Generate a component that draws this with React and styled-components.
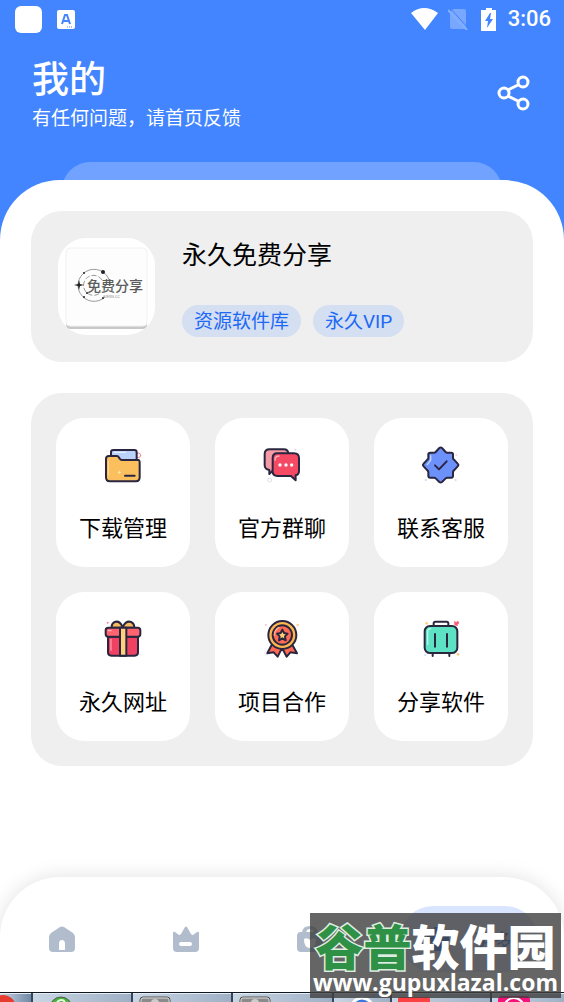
import React from "react";
import styled, { createGlobalStyle } from "styled-components";

const colors = {
    primary: "#4285ff",
    primarySoft: "#71a2ff",
    card: "#efefef",
    tag: "#d5dff2",
    tagText: "#1c69f5",
    navIcon: "#b1bccd",
    line: "#2b2640",
};

const GlobalStyle = createGlobalStyle`
    * {
        box-sizing: border-box;
    }

    body {
        margin: 0;
        background-color: #fff;
        font-family: "Noto Sans CJK SC", Roboto, sans-serif;
        color: #000;
    }

    button {
        font-family: inherit;
        color: inherit;
        border: none;
        padding: 0;
        cursor: pointer;
    }

    svg {
        display: block;
    }
`;

const Page = styled.div`
    position: relative;
    display: flex;
    flex-direction: column;
    min-height: 100vh;
    overflow: hidden;
`;

const Header = styled.header`
    background-color: ${colors.primary};
    color: #fff;
`;

const StatusBar = styled.div`
    display: flex;
    align-items: center;
    justify-content: space-between;
    height: 38px;
    padding: 0 13px 0 15px;
`;

const StatusGroup = styled.div`
    display: flex;
    align-items: center;
    gap: ${({ $gap }) => $gap}px;
`;

const AppDot = styled.span`
    width: 27px;
    height: 27px;
    border-radius: 6px;
    background-color: #fff;
`;

const Clock = styled.span`
    font-family: Roboto, sans-serif;
    font-size: 22px;
    font-weight: 500;
    line-height: 28px;
`;

const HeaderRow = styled.div`
    display: flex;
    align-items: center;
    justify-content: space-between;
    padding: 17px 34px 31px 32px;
`;

const Title = styled.h1`
    margin: 0 0 4px;
    font-size: 37px;
    line-height: 44px;
    font-weight: 500;
`;

const Subtitle = styled.p`
    margin: 0;
    font-size: 19px;
    line-height: 28px;
`;

const ShareButton = styled.button`
    background: none;
`;

const Peek = styled.div`
    height: 78px;
    margin: 0 62px;
    border-radius: 28px 28px 0 0;
    background-color: ${colors.primarySoft};
`;

const Sheet = styled.main`
    flex: 1;
    display: flex;
    flex-direction: column;
    gap: 31px;
    margin-top: -60px;
    padding: 31px;
    border-radius: 60px 60px 0 0;
    background-color: #fff;
`;

const Profile = styled.section`
    display: flex;
    align-items: flex-start;
    gap: 27px;
    padding: 27px 27px 25px;
    border-radius: 31px;
    background-color: ${colors.card};
`;

const Avatar = styled.div`
    flex: none;
    width: 97px;
    height: 97px;
    border-radius: 28px;
    background-color: #fff;
    overflow: hidden;
`;

const Name = styled.h2`
    margin: 0 0 37px;
    font-size: 25px;
    line-height: 30px;
    font-weight: 400;
`;

const Tags = styled.div`
    display: flex;
    flex-wrap: wrap;
    gap: 12px;
`;

const Tag = styled.span`
    padding: 2px 12px 0;
    border-radius: 16px;
    font-family: Roboto, "Noto Sans CJK SC", sans-serif;
    font-size: 19px;
    line-height: 30px;
    color: ${colors.tagText};
    background-color: ${colors.tag};
`;

const Grid = styled.section`
    display: grid;
    grid-template-columns: repeat(3, 1fr);
    gap: 25px;
    padding: 25px;
    border-radius: 31px;
    background-color: ${colors.card};
`;

const Tile = styled.button`
    display: flex;
    flex-direction: column;
    align-items: center;
    gap: 26px;
    && {
        padding: 27px 0 26px;
    }
    border-radius: 28px;
    background-color: #fff;
`;

const TileLabel = styled.span`
    font-size: 22px;
    line-height: 30px;
`;

const NavBar = styled.nav`
    display: flex;
    align-items: center;
    justify-content: space-between;
    padding: 29px 26px 20px 28px;
    border-radius: 60px 60px 0 0;
    background-color: #fff;
    box-shadow: 0 0 20px rgba(0, 0, 0, 0.12);
`;

const NavItem = styled.button`
    display: flex;
    align-items: center;
    justify-content: center;
    gap: 24px;
    width: ${({ $active }) => ($active ? 138 : 68)}px;
    height: 66px;
    border-radius: 33px;
    font-size: 19px;
    color: ${({ $active }) => ($active ? "#2f6df0" : colors.navIcon)};
    background-color: ${({ $active }) => ($active ? "#d9e5ff" : "transparent")};
`;

const Taskbar = styled.footer`
    display: grid;
    grid-template-columns: 31fr 98fr 98fr 98fr 56fr 98fr 72fr;
    gap: 2px;
    height: 10px;
    border-top: 1px solid #10161e;
    background-color: #33465c;
    overflow: hidden;
`;

const Task = styled.div`
    min-width: 0;
    padding-left: ${({ $pad }) => $pad}px;
    border-top: 1px solid #e4edf5;
    background: linear-gradient(90deg, #c9d6e4, ${({ $dark }) => ($dark ? "#7089a6" : "#9fb0c5")});
`;

const Watermark = styled.aside`
    position: absolute;
    right: 3px;
    bottom: 4px;
    width: 251px;
    height: 85px;
    display: flex;
    flex-direction: column;
    align-items: center;
    background-color: rgba(62, 62, 62, 0.8);
    color: #fff;
    white-space: nowrap;
`;

const Brand = styled.strong`
    margin-top: 5px;
    font-size: 48px;
    line-height: 52px;
    font-weight: 900;
`;

const BrandGreen = styled.span`
    color: #2f9145;
    -webkit-text-stroke: 3px #dfeee2;
    paint-order: stroke fill;
`;

const Site = styled.span`
    font-family: "Open Sans", sans-serif;
    font-size: 23px;
    line-height: 24px;
    font-weight: 700;
`;

const Outline = ({ box, children }) => (
    <svg
        width="40"
        height="40"
        viewBox={box}
        fill="none"
        stroke={colors.line}
        strokeWidth="6"
        strokeLinecap="round"
        strokeLinejoin="round"
        aria-hidden="true"
    >
        {children}
    </svg>
);

const FolderIcon = () => (
    <Outline box="24 30 120 120">
        <circle cx="130" cy="61" r="7" stroke="#f3879b" strokeWidth="3" />
        <circle cx="36" cy="48" r="2" fill="#dcd9ef" stroke="none" />
        <path d="M48 70V52q0-7 7-7h63q7 0 7 7v28H48z" fill="#b9d1fb" />
        <path d="M58 52h34" stroke="#e5efff" strokeWidth="4" />
        <path d="M33 72q0-9 9-9h23q5 0 7 5l2 3q2 4 7 4h49q4 0 4 9v43q0 12-11 12H44q-11 0-11-12z" fill="#fcbf5d" />
        <path d="M40 78v42" stroke="#ffdda0" strokeWidth="3" />
        <path d="M90 122h29" />
        <path d="M73 108v8M69 112h8" stroke="#ffe5b5" strokeWidth="3" />
    </Outline>
);

const ChatIcon = () => (
    <Outline box="31 30 120 120">
        <circle cx="54" cy="135" r="6" stroke="#dedce9" strokeWidth="3" />
        <circle cx="131" cy="44" r="3" fill="#e0dcee" stroke="none" />
        <path d="M54 43h42q14 0 14 14v34q0 12-13 12H67L53 117v-12q-14-2-14-14V57q0-14 15-14z" fill="#f69aa6" />
        <path d="M77 55h50q15 0 15 15v37q0 12-10 14v15l-14-13H77q-14 0-14-14V69q0-14 14-14z" fill="#f64a64" />
        <path d="M70 76q0-13 12-13" stroke="#ffb3bd" strokeWidth="4" />
        <g fill="#fff" stroke="none">
            <circle cx="85" cy="90" r="5" />
            <circle cx="103" cy="90" r="5" />
            <circle cx="120" cy="90" r="5" />
        </g>
    </Outline>
);

const BadgeIcon = () => (
    <Outline box="33 30 120 120">
        <g stroke="none">
            <circle cx="54" cy="58" r="3" fill="#ffe0aa" />
            <circle cx="139" cy="60" r="3" fill="#ffd5dc" />
            <circle cx="47" cy="135" r="3" fill="#b8d7ff" />
            <circle cx="137" cy="135" r="3" fill="#c9dcff" />
        </g>
        <path d="M88 39q4-3 8 0l11 12q2 2 5 2h12q5 0 5 5v11q0 3 3 5l11 12q4 4 0 8l-11 12q-3 2-3 5v11q0 6-5 6h-12q-3 0-5 2l-11 11q-4 3-8 0l-11-11q-2-2-5-2H61q-6 0-6-6v-11q0-3-3-5L41 94q-4-4 0-8l11-12q3-2 3-5V58q0-5 6-5h11q3 0 5-2z" fill="#6d91fb" />
        <path d="M62 62v14l-10 13" stroke="#c5d5ff" strokeWidth="4" />
        <path d="m75 91 12 12 23-24" />
    </Outline>
);

const GiftIcon = () => (
    <Outline box="24 27 120 120">
        <circle cx="38" cy="38" r="3" fill="#f88794" stroke="none" />
        <circle cx="136" cy="133" r="2" fill="#d9dcf0" stroke="none" />
        <path d="M82 53H50q-1-12 9-17 14-5 23 13zM84 53h34q0-13-10-17-14-5-24 13z" fill="#f8bb61" />
        <path d="M39 80h90v47q0 10-10 10H49q-10 0-10-10z" fill="#ef4263" />
        <rect x="32" y="53" width="104" height="27" rx="8" fill="#ff6470" />
        <path d="M75 53h19v84H75z" fill="#ffd07c" />
        <path d="M48 88v33" stroke="#ff99a5" strokeWidth="4" />
        <path d="M40 62h8" stroke="#ffb1b6" strokeWidth="4" />
    </Outline>
);

const MedalIcon = () => (
    <Outline box="31 27 120 120">
        <circle cx="138" cy="45" r="4" fill="#ffd48c" stroke="none" />
        <circle cx="43" cy="44" r="3" fill="#efc1df" stroke="none" />
        <circle cx="44" cy="129" r="5" stroke="#e2dfee" strokeWidth="2" />
        <path d="m61 103-14 27 19-3 12 13 14-28zM121 103l15 27-20-3-11 13-15-28z" fill="#ff6953" />
        <circle cx="92" cy="75" r="42" fill="#fdb64f" />
        <circle cx="92" cy="75" r="29" fill="#ff6a54" />
        <path d="M68 75q1-17 14-23" stroke="#ffad9a" strokeWidth="4" />
        <path d="m92 59 5 10 11 2-8 8 2 12-10-6-10 6 2-12-8-8 11-2z" fill="#ffd270" />
    </Outline>
);

const LuggageIcon = () => (
    <Outline box="33 27 120 120">
        <circle cx="50" cy="40" r="4" fill="#ffcf79" stroke="none" />
        <circle cx="144" cy="133" r="4" fill="#ffc77c" stroke="none" />
        <circle cx="46" cy="135" r="3" fill="#c8dcff" stroke="none" />
        <path d="m134 35 5 2 5-3 3 5-4 4-1 4-7-2z" fill="#f75e79" stroke="#f75e79" strokeWidth="2" />
        <path d="M71 47v-7q0-5 5-5h34q5 0 5 5v7M68 130v8M118 130v8" />
        <rect x="44" y="48" width="98" height="81" rx="16" fill="#5de3c3" />
        <path d="M53 103V66q0-10 9-10" stroke="#baffea" strokeWidth="4" />
        <path d="M75 72v38M111 72v38" />
    </Outline>
);

const ShareIcon = () => (
    <svg width="34" height="38" viewBox="0 0 34 38" fill="none" stroke="#fff" strokeWidth="3" aria-hidden="true">
        <circle cx="8" cy="19" r="5" />
        <circle cx="27" cy="8" r="5" />
        <circle cx="27" cy="30" r="5" />
        <path d="m12 16 10-5M12 22l10 5" />
    </svg>
);

const HomeIcon = () => (
    <svg width="28" height="28" viewBox="0 0 28 28" fill="currentColor" aria-hidden="true">
        <path fillRule="evenodd" d="M12 2q2-1 4 0l9 6q2 2 2 4v11q0 4-4 4H5q-4 0-4-4V12q0-2 2-4zM11 25h6v-6q0-4-3-4t-3 4z" />
    </svg>
);

const CrownIcon = () => (
    <svg width="28" height="28" viewBox="0 0 28 28" fill="currentColor" aria-hidden="true">
        <path fillRule="evenodd" d="M1 8q0-2 2-1l4 3q1 0 2-1l4-7q1-1 2 0l4 7q1 1 2 1l4-3q2-1 2 1v15q0 4-4 4H5q-4 0-4-4zM9 17a1 1 0 0 0 0 4h9a1 1 0 0 0 0-4z" />
    </svg>
);

const BagIcon = () => (
    <svg width="28" height="28" viewBox="0 0 28 28" fill="currentColor" aria-hidden="true">
        <path fillRule="evenodd" d="M6 7q1-6 8-6t8 6h1q4 0 4 4v12q0 4-4 4H5q-4 0-4-4V11q0-4 4-4zm4 0h8q-1-3-4-3t-4 3zM8 14q0 9 6 9t6-9q-3-2-6 1-3-3-6-1z" />
    </svg>
);

const MoreIcon = () => (
    <svg width="24" height="26" viewBox="0 0 24 26" fill="currentColor" aria-hidden="true">
        <path d="M8 1h8v7h7v9h-7v8H8v-8H1V8h7z" />
    </svg>
);

const Logo = () => (
    <svg width="97" height="97" viewBox="0 0 97 97" role="img" aria-label="免费分享">
        <rect x="8" y="15" width="81" height="76" rx="4" fill="#c8c8c8" />
        <rect x="8" y="10" width="81" height="78" rx="4" fill="#fdfdfd" stroke="#f1f1f1" />
        <g fill="none" stroke="#999">
            <path d="M52 46A16 16 0 1 0 47 59" />
            <path d="M44 42a10 10 0 1 0-1 12" strokeDasharray="5 2" />
        </g>
        <g fill="#222">
            <circle cx="45" cy="34" r="2" />
            <circle cx="26" cy="35" r="1" />
            <circle cx="26" cy="59" r="1" />
            <circle cx="29" cy="55" r="1" />
            <circle cx="45" cy="60" r="1" />
            <path d="m21 42 1 4 4 1-4 1-1 4-1-4-4-1 4-1z" />
        </g>
        <text x="29" y="53" fontSize="14" fontWeight="500" fill="#5c5c5c">免费分享</text>
        <text x="45" y="60" fontSize="4" fill="#888">AIMIN.CC</text>
    </svg>
);

const tiles = [
    { label: "下载管理", Icon: FolderIcon },
    { label: "官方群聊", Icon: ChatIcon },
    { label: "联系客服", Icon: BadgeIcon },
    { label: "永久网址", Icon: GiftIcon },
    { label: "项目合作", Icon: MedalIcon },
    { label: "分享软件", Icon: LuggageIcon },
];

const GrayApp = () => (
    <svg width="32" height="8" viewBox="0 0 32 8">
        <rect x="1" y="3" width="30" height="12" rx="3" fill="#8b8b8b" stroke="#4c4c4c" />
        <rect x="2" y="4" width="28" height="12" rx="2" fill="none" stroke="#ddd" />
        <circle cx="16" cy="9" r="4" fill="#ccc" />
    </svg>
);

export default function App() {
    return (
        <Page>
            <GlobalStyle />
            <Header>
                <StatusBar>
                    <StatusGroup $gap={15}>
                        <AppDot />
                        <svg width="18" height="19" viewBox="0 0 18 19">
                            <rect width="18" height="19" rx="2" fill="#fff" />
                            <path d="M5 14 8 5h2l3 9M6 11h6" fill="none" stroke={colors.primary} strokeWidth="2" />
                            <path d="M10 17h6" stroke={colors.primary} strokeDasharray="1 1" />
                        </svg>
                    </StatusGroup>
                    <StatusGroup $gap={10}>
                        <svg width="27" height="22" viewBox="0 0 27 22">
                            <path d="M0 5q13-10 27 0L14 22z" fill="#fff" />
                        </svg>
                        <svg width="20" height="22" viewBox="0 0 20 22">
                            <path d="M5 1h11q2 0 2 2v18H4q-2 0-2-2V4z" fill="#77a7ff" />
                            <path d="m2 0 18 20" stroke={colors.primary} strokeWidth="1" />
                            <path d="m0 2 19 20" stroke="#83aeff" strokeWidth="2" />
                        </svg>
                        <svg width="20" height="23" viewBox="0 0 20 23">
                            <path d="M8 0h6v2h4v21H3V2h5z" fill="#fff" />
                            <path d="m12 5-5 8h3l-1 7 6-9h-3l1-6z" fill={colors.primary} />
                        </svg>
                        <Clock>3:06</Clock>
                    </StatusGroup>
                </StatusBar>
                <HeaderRow>
                    <div>
                        <Title>我的</Title>
                        <Subtitle>有任何问题，请首页反馈</Subtitle>
                    </div>
                    <ShareButton aria-label="分享">
                        <ShareIcon />
                    </ShareButton>
                </HeaderRow>
                <Peek />
            </Header>

            <Sheet>
                <Profile>
                    <Avatar>
                        <Logo />
                    </Avatar>
                    <div>
                        <Name>永久免费分享</Name>
                        <Tags>
                            <Tag>资源软件库</Tag>
                            <Tag>永久VIP</Tag>
                        </Tags>
                    </div>
                </Profile>
                <Grid>
                    {tiles.map(({ label, Icon }) => (
                        <Tile key={label}>
                            <Icon />
                            <TileLabel>{label}</TileLabel>
                        </Tile>
                    ))}
                </Grid>
            </Sheet>

            <NavBar>
                <NavItem aria-label="首页"><HomeIcon /></NavItem>
                <NavItem aria-label="会员"><CrownIcon /></NavItem>
                <NavItem aria-label="商店"><BagIcon /></NavItem>
                <NavItem $active>
                    <MoreIcon />
                    更多
                </NavItem>
            </NavBar>

            <Taskbar>
                <Task $pad={0} $dark>
                    <svg width="16" height="8"><circle cx="3" cy="14" r="13" fill="#e53c2f" /></svg>
                </Task>
                <Task $pad={16}>
                    <svg width="24" height="8">
                        <circle cx="12" cy="14" r="11" fill="#49b53b" stroke="#555" />
                        <path d="M8 8q5-4 8 0" stroke="#e6ffe0" strokeWidth="2" fill="none" />
                    </svg>
                </Task>
                <Task $pad={6}><GrayApp /></Task>
                <Task $pad={6}><GrayApp /></Task>
                <Task $pad={16}>
                    <svg width="24" height="8"><circle cx="12" cy="15" r="11" fill="#3778df" stroke="#fff" strokeWidth="3" /></svg>
                </Task>
                <Task $pad={6}>
                    <svg width="32" height="8"><rect y="3" width="32" height="12" rx="2" fill="#fb4144" /></svg>
                </Task>
                <Task $pad={6}>
                    <svg width="32" height="8">
                        <rect y="2" width="32" height="12" rx="4" fill="#f5127b" />
                        <circle cx="16" cy="14" r="10" fill="none" stroke="#fff" strokeWidth="2" />
                    </svg>
                </Task>
            </Taskbar>

            <Watermark>
                <Brand><BrandGreen>谷普</BrandGreen>软件园</Brand>
                <Site>www.gupuxlazal.com</Site>
            </Watermark>
        </Page>
    );
}
